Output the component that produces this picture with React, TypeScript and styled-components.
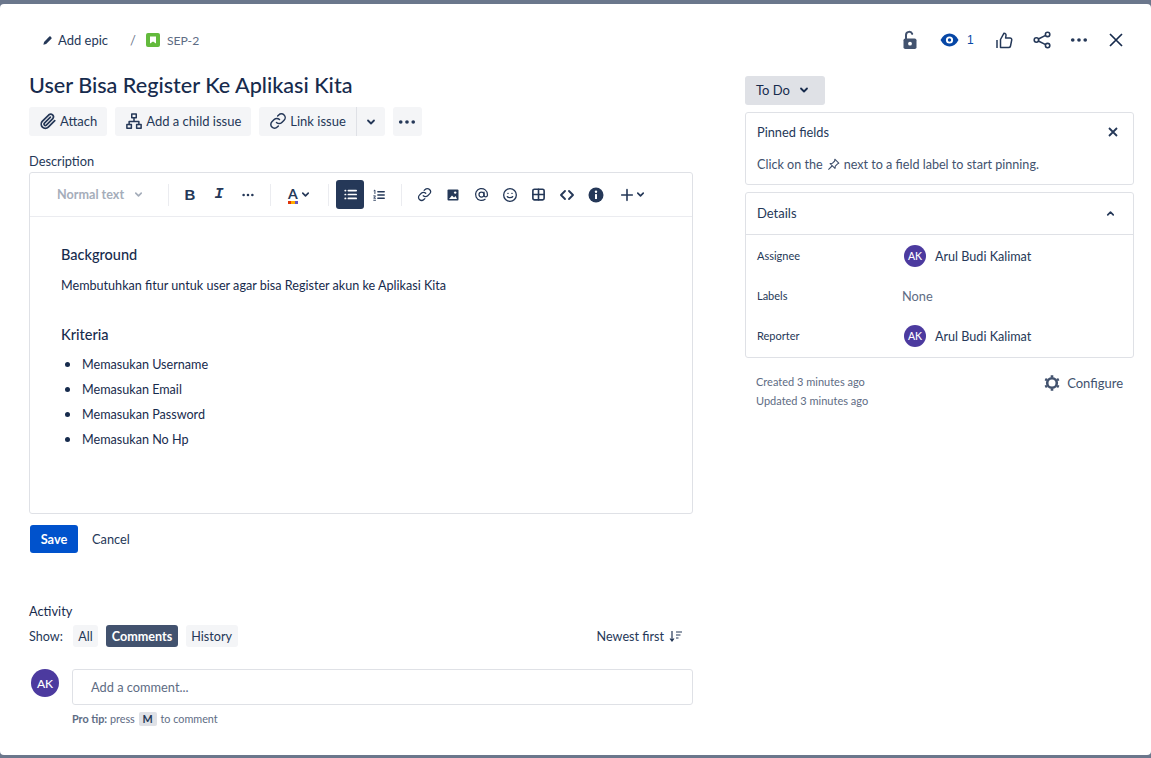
import React from 'react';
import styled, { createGlobalStyle } from 'styled-components';

const Global = createGlobalStyle`
    html, body { margin: 0; padding: 0; background: #6b778c; }
    * { box-sizing: border-box; }
    body { font-family: "Lato", "Noto Sans", sans-serif; color: #172b4d; }
`;

const Icon = ({ size = 16, color = 'currentColor', children }: { size?: number; color?: string; children: React.ReactNode }) => (
    <svg width={size} height={size} viewBox="0 0 24 24" fill="none" stroke={color} strokeWidth={2} strokeLinecap="round" strokeLinejoin="round" style={{ flex: 'none' }}>
        {children}
    </svg>
);

const Chevron = ({ size = 12, color = '#253858', up = false }: { size?: number; color?: string; up?: boolean }) => (
    <Icon size={size} color={color}>
        <path d={up ? 'M6 15l6-6 6 6' : 'M6 9l6 6 6-6'} strokeWidth={3.6} />
    </Icon>
);

const Dots = ({ size = 18, color = '#253858' }: { size?: number; color?: string }) => (
    <svg width={size} height={size} viewBox="0 0 24 24" fill={color} style={{ flex: 'none' }}>
        <circle cx="4.5" cy="12" r="2.2" />
        <circle cx="12" cy="12" r="2.2" />
        <circle cx="19.5" cy="12" r="2.2" />
    </svg>
);

const LinkGlyph = ({ size = 18 }: { size?: number }) => (
    <Icon size={size} color="#253858">
        <path d="M10 14a5 5 0 0 0 7.1 0l3-3a5 5 0 0 0-7.1-7.1l-1.5 1.5" />
        <path d="M14 10a5 5 0 0 0-7.1 0l-3 3a5 5 0 0 0 7.1 7.1l1.5-1.5" />
    </Icon>
);

export default function App() {
    return (
        <>
            <Global />
            <Modal>
                <LeftColumn>
                    <Breadcrumbs>
                        <Crumb>
                            <svg width="11" height="11" viewBox="0 0 24 24" fill="#253858">
                                <path d="M3 21l1.5-6L16 3.5a2 2 0 0 1 2.8 0l1.7 1.7a2 2 0 0 1 0 2.8L9 19.5z" />
                            </svg>
                            Add epic
                        </Crumb>
                        <Slash>/</Slash>
                        <svg width="14" height="14" viewBox="0 0 14 14">
                            <rect width="14" height="14" rx="2" fill="#63ba3c" />
                            <path d="M4 3.5h6v7L7 8.5l-3 2z" fill="#fff" />
                        </svg>
                        <IssueKey>SEP-2</IssueKey>
                    </Breadcrumbs>

                    <Title>User Bisa Register Ke Aplikasi Kita</Title>

                    <Actions>
                        <ActionButton>
                            <Icon size={18} color="#253858">
                                <path d="M21 11.5l-8.6 8.6a5.5 5.5 0 0 1-7.8-7.8l8.6-8.6a3.7 3.7 0 0 1 5.2 5.2l-8.6 8.6a1.8 1.8 0 0 1-2.6-2.6l8-8" strokeWidth={2.3} />
                            </Icon>
                            Attach
                        </ActionButton>
                        <ActionButton>
                            <Icon size={18} color="#253858">
                                <rect x="9" y="2.5" width="6" height="5" />
                                <rect x="2.5" y="16.5" width="6" height="5" />
                                <rect x="15.5" y="16.5" width="6" height="5" />
                                <path d="M12 7.5v5M5.5 16.5v-4h13v4" />
                            </Icon>
                            Add a child issue
                        </ActionButton>
                        <SplitGroup>
                            <SplitMain>
                                <LinkGlyph />
                                Link issue
                            </SplitMain>
                            <SplitArrow>
                                <Chevron />
                            </SplitArrow>
                        </SplitGroup>
                        <SquareButton>
                            <Dots size={20} />
                        </SquareButton>
                    </Actions>

                    <DescriptionLabel>Description</DescriptionLabel>
                    <Editor>
                        <Toolbar>
                            <FormatSelect>
                                Normal text
                                <Chevron size={11} color="#a5adba" />
                            </FormatSelect>
                            <Divider />
                            <ToolGroup>
                                <ToolButton>
                                    <BoldMark>B</BoldMark>
                                </ToolButton>
                                <ToolButton>
                                    <ItalicMark>I</ItalicMark>
                                </ToolButton>
                                <ToolButton>
                                    <Dots size={14} />
                                </ToolButton>
                            </ToolGroup>
                            <Divider />
                            <ColorButton>
                                <ColorLetter>A</ColorLetter>
                                <Chevron size={11} />
                            </ColorButton>
                            <Divider />
                            <ToolGroup>
                                <ToolButton $active>
                                    <Icon size={17} color="#fff">
                                        <path d="M9 6.5h11M9 12h11M9 17.5h11M4.5 6.5h.5M4.5 12h.5M4.5 17.5h.5" strokeWidth={2.4} />
                                    </Icon>
                                </ToolButton>
                                <ToolButton>
                                    <Icon size={14} color="#253858">
                                        <path d="M10 6.5h11M10 12h11M10 17.5h11" strokeWidth={2.4} />
                                        <path d="M3.5 4.5l1.5-1v6M3 13.5h3l-3 4h3M3 21h3" strokeWidth={1.6} />
                                    </Icon>
                                </ToolButton>
                            </ToolGroup>
                            <Divider />
                            <InsertGroup>
                                <ToolButton>
                                    <LinkGlyph size={15} />
                                </ToolButton>
                                <ToolButton>
                                    <svg width="14" height="14" viewBox="0 0 14 14">
                                        <rect x="1.5" y="1.5" width="11" height="11" rx="1" fill="#253858" />
                                        <path d="M3 11l3-3.5 2 2 1.5-1.5L11 11z" fill="#fff" />
                                        <circle cx="9.2" cy="4.6" r="1.2" fill="#fff" />
                                    </svg>
                                </ToolButton>
                                <ToolButton>
                                    <Icon size={15} color="#253858">
                                        <circle cx="12" cy="12" r="4" />
                                        <path d="M16 8v5.5a2.8 2.8 0 0 0 5.5 0V12a9.5 9.5 0 1 0-3.8 7.6" />
                                    </Icon>
                                </ToolButton>
                                <ToolButton>
                                    <Icon size={16} color="#253858">
                                        <circle cx="12" cy="12" r="9.5" />
                                        <path d="M8 14.5c1 2 7 2 8 0M8.8 9.5h.4M14.8 9.5h.4" />
                                    </Icon>
                                </ToolButton>
                                <ToolButton>
                                    <Icon size={15} color="#253858">
                                        <rect x="3" y="3.5" width="18" height="17" rx="2.5" strokeWidth={2.6} />
                                        <path d="M3 12h18M12 3.5v17" strokeWidth={2.6} />
                                    </Icon>
                                </ToolButton>
                                <ToolButton>
                                    <Icon size={16} color="#253858">
                                        <path d="M9 6l-6 6 6 6M15 6l6 6-6 6" strokeWidth={2.8} />
                                    </Icon>
                                </ToolButton>
                                <ToolButton>
                                    <svg width="16" height="16" viewBox="0 0 16 16">
                                        <circle cx="8" cy="8" r="7.5" fill="#253858" />
                                        <rect x="7" y="7" width="2" height="5" rx="0.6" fill="#fff" />
                                        <circle cx="8" cy="4.8" r="1.2" fill="#fff" />
                                    </svg>
                                </ToolButton>
                                <PlusButton>
                                    <Icon size={16} color="#253858">
                                        <path d="M12 4v16M4 12h16" strokeWidth={2.4} />
                                    </Icon>
                                    <Chevron size={11} />
                                </PlusButton>
                            </InsertGroup>
                        </Toolbar>
                        <EditorBody>
                            <EditorHeading>Background</EditorHeading>
                            <EditorText>Membutuhkan fitur untuk user agar bisa Register akun ke Aplikasi Kita</EditorText>
                            <EditorHeading $spaced>Kriteria</EditorHeading>
                            <BulletList>
                                <li>Memasukan Username</li>
                                <li>Memasukan Email</li>
                                <li>Memasukan Password</li>
                                <li>Memasukan No Hp</li>
                            </BulletList>
                        </EditorBody>
                    </Editor>

                    <FormButtons>
                        <SaveButton>Save</SaveButton>
                        <CancelButton>Cancel</CancelButton>
                    </FormButtons>

                    <ActivityTitle>Activity</ActivityTitle>
                    <ShowRow>
                        <ShowLabel>Show:</ShowLabel>
                        <Filter>All</Filter>
                        <Filter $active>Comments</Filter>
                        <Filter>History</Filter>
                        <SortButton>
                            Newest first
                            <svg width="13" height="13" viewBox="0 0 13 13" fill="none" stroke="#253858" strokeWidth="1.2">
                                <path d="M3 1v10M1 8.5L3 11l2-2.5M7 2h6M7 5h4.5M7 8h2.5" />
                            </svg>
                        </SortButton>
                    </ShowRow>
                    <CommentRow>
                        <Avatar $size={28}>AK</Avatar>
                        <CommentBox>Add a comment...</CommentBox>
                    </CommentRow>
                    <ProTip>
                        <strong>Pro tip:</strong> press <KeyCap>M</KeyCap> to comment
                    </ProTip>
                </LeftColumn>

                <RightColumn>
                    <TopIcons>
                        <TopIcon>
                            <svg width="18" height="20" viewBox="0 0 18 20" fill="none">
                                <path d="M5 9V5a3.2 3.2 0 0 1 6.2-1.1" stroke="#42526e" strokeWidth="2" strokeLinecap="round" />
                                <rect x="2.5" y="8.5" width="13" height="10.5" rx="1.8" fill="#42526e" />
                                <circle cx="9" cy="13.7" r="1.9" fill="#fff" />
                            </svg>
                        </TopIcon>
                        <WatchButton>
                            <svg width="19" height="14" viewBox="0 0 19 14">
                                <path d="M0.5 7C3 2.5 6 0.5 9.5 0.5S16 2.5 18.5 7C16 11.5 13 13.5 9.5 13.5S3 11.5 0.5 7z" fill="#0747a6" />
                                <circle cx="9.5" cy="7" r="3.6" fill="#fff" />
                                <circle cx="9.5" cy="7" r="1.7" fill="#0747a6" />
                            </svg>
                            <WatchCount>1</WatchCount>
                        </WatchButton>
                        <TopIcon>
                            <svg width="17" height="17" viewBox="0 0 17 17" fill="none" stroke="#253858" strokeWidth="1.5" strokeLinejoin="round">
                                <path d="M1 8v8M4.5 7.5L8 1.2c1.4 0 2.2 1 2 2.3L9.6 6H14c1.2 0 2 1 1.7 2.2l-1.2 5.8c-.2 1-.9 1.6-2 1.6H4.5z" />
                            </svg>
                        </TopIcon>
                        <TopIcon>
                            <svg width="18" height="18" viewBox="0 0 18 18" fill="none" stroke="#253858" strokeWidth="1.6">
                                <circle cx="3.4" cy="9" r="2.2" />
                                <circle cx="14.6" cy="3.4" r="2.2" />
                                <circle cx="14.6" cy="14.6" r="2.2" />
                                <path d="M5.4 8l7.2-3.6M5.4 10l7.2 3.6" />
                            </svg>
                        </TopIcon>
                        <TopIcon>
                            <Dots size={20} />
                        </TopIcon>
                        <TopIcon>
                            <svg width="14" height="14" viewBox="0 0 14 14" fill="none" stroke="#172b4d" strokeWidth="1.7">
                                <path d="M1 1l12 12M13 1L1 13" />
                            </svg>
                        </TopIcon>
                    </TopIcons>

                    <StatusButton>
                        To Do
                        <Chevron size={12} color="#172b4d" />
                    </StatusButton>

                    <PinnedPanel>
                        <PinnedHead>
                            Pinned fields
                            <svg width="10" height="10" viewBox="0 0 10 10" fill="none" stroke="#253858" strokeWidth="1.8">
                                <path d="M1 1l8 8M9 1L1 9" />
                            </svg>
                        </PinnedHead>
                        <PinnedHint>
                            Click on the
                            <svg width="13" height="13" viewBox="0 0 13 13" fill="none" stroke="#42526e" strokeWidth="1.1" strokeLinejoin="round">
                                <path d="M7.8 1.2l4 4-1.2.6-2.3 2.4-.3 2.2L3.1 5.6l2.2-.3 2.4-2.3zM5 8l-3.6 3.6" />
                            </svg>
                            next to a field label to start pinning.
                        </PinnedHint>
                    </PinnedPanel>

                    <DetailsPanel>
                        <DetailsHead>
                            Details
                            <Chevron size={11} up />
                        </DetailsHead>
                        <DetailsBody>
                            <FieldRow>
                                <FieldLabel>Assignee</FieldLabel>
                                <FieldValue>
                                    <Avatar $size={22}>AK</Avatar>
                                    Arul Budi Kalimat
                                </FieldValue>
                            </FieldRow>
                            <FieldRow>
                                <FieldLabel>Labels</FieldLabel>
                                <NoneValue>None</NoneValue>
                            </FieldRow>
                            <FieldRow>
                                <FieldLabel>Reporter</FieldLabel>
                                <FieldValue>
                                    <Avatar $size={22}>AK</Avatar>
                                    Arul Budi Kalimat
                                </FieldValue>
                            </FieldRow>
                        </DetailsBody>
                    </DetailsPanel>

                    <MetaRow>
                        <Timestamps>
                            <span>Created 3 minutes ago</span>
                            <span>Updated 3 minutes ago</span>
                        </Timestamps>
                        <ConfigureButton>
                            <svg width="18" height="18" viewBox="0 0 18 18" fill="none" stroke="#42526e" strokeWidth="2.6">
                                <circle cx="9" cy="9" r="4.8" />
                                <path d="M9 1.2v2M9 14.8v2M2.2 5.1l1.8 1M14 11.9l1.8 1M2.2 12.9l1.8-1M14 6.1l1.8-1" />
                            </svg>
                            Configure
                        </ConfigureButton>
                    </MetaRow>
                </RightColumn>
            </Modal>
        </>
    );
}

const Modal = styled.div`
    margin-top: 4px;
    width: 1151px;
    height: 751px;
    background: #fff;
    border-radius: 4px;
    display: flex;
    padding: 0 17px 0 29px;
    overflow: hidden;
`;

const LeftColumn = styled.div`
    width: 664px;
    display: flex;
    flex-direction: column;
    align-items: stretch;
`;

const RightColumn = styled.div`
    width: 389px;
    margin-left: 52px;
    display: flex;
    flex-direction: column;
`;

const Breadcrumbs = styled.div`
    height: 20px;
    margin-top: 26px;
    padding-left: 13px;
    display: flex;
    align-items: center;
    font-size: 13px;
`;

const Crumb = styled.span`
    display: flex;
    align-items: center;
    gap: 5px;
    color: #253858;
`;

const Slash = styled.span`
    margin: 0 10px 0 22px;
    color: #6b778c;
`;

const IssueKey = styled.span`
    margin-left: 7px;
    font-size: 12.2px;
    color: #5e6c84;
`;

const Title = styled.h1`
    margin: 19px 0 0;
    height: 32px;
    line-height: 32px;
    font-size: 21.6px;
    font-weight: 500;
    color: #172b4d;
    white-space: nowrap;
`;

const Actions = styled.div`
    margin-top: 6px;
    display: flex;
    gap: 8px;
    height: 29px;
`;

const ActionButton = styled.div`
    display: flex;
    align-items: center;
    gap: 3px;
    padding: 0 10px 1px;
    background: #f4f5f7;
    border-radius: 3px;
    font-size: 13px;
    color: #253858;
`;

const SplitGroup = styled.div`
    display: flex;
`;

const SplitMain = styled(ActionButton)`
    border-radius: 3px 0 0 3px;
    border-right: 1px solid #dfe1e6;
    padding: 0 10px 1px 10px;
`;

const SplitArrow = styled(ActionButton)`
    border-radius: 0 3px 3px 0;
    padding: 0 8px;
`;

const SquareButton = styled(ActionButton)`
    padding: 0 4.5px;
`;

const DescriptionLabel = styled.div`
    margin-top: 16px;
    height: 19px;
    line-height: 19px;
    font-size: 12.8px;
    color: #253858;
`;

const Editor = styled.div`
    margin-top: 1px;
    height: 342px;
    border: 1px solid #dfe1e6;
    border-radius: 3px;
    display: flex;
    flex-direction: column;
`;

const Toolbar = styled.div`
    height: 44px;
    flex: none;
    border-bottom: 1px solid #ebecf0;
    display: flex;
    align-items: center;
    padding-left: 27px;
`;

const FormatSelect = styled.div`
    width: 111px;
    display: flex;
    align-items: center;
    gap: 9px;
    font-size: 12.6px;
    font-weight: 700;
    color: #a5adba;
`;

const Divider = styled.span`
    width: 1px;
    height: 22px;
    background: #ebecf0;
    flex: none;
`;

const ToolGroup = styled.div`
    display: flex;
    gap: 1px;
    margin: 0 8px 0 7px;
`;

const InsertGroup = styled(ToolGroup)`
    gap: 0.7px;
    margin: 0 0 0 8px;
`;

const ToolButton = styled.div<{ $active?: boolean }>`
    width: 28px;
    height: 29px;
    border-radius: 3px;
    display: flex;
    align-items: center;
    justify-content: center;
    background: ${p => (p.$active ? '#253858' : 'transparent')};
`;

const BoldMark = styled.span`
    font-family: "Liberation Sans", sans-serif;
    font-size: 15px;
    font-weight: 700;
    color: #253858;
`;

const ItalicMark = styled.span`
    font-family: "Liberation Mono", monospace;
    font-size: 15px;
    font-style: italic;
    font-weight: 700;
    color: #253858;
`;

const ColorButton = styled.div`
    width: 57px;
    padding-left: 17px;
    display: flex;
    align-items: center;
    gap: 2px;
`;

const ColorLetter = styled.span`
    font-size: 14px;
    font-weight: 700;
    line-height: 15px;
    color: #253858;
    border-bottom: 3px solid transparent;
    border-image: linear-gradient(90deg, #de350b 0 33%, #ffab00 33% 66%, #6554c0 66%) 1;
`;

const PlusButton = styled.div`
    margin-left: 2px;
    display: flex;
    align-items: center;
    gap: 0;
    padding-left: 6px;
`;

const EditorBody = styled.div`
    padding: 28px 31px 0;
    font-size: 12.6px;
    color: #172b4d;
`;

const EditorHeading = styled.h3<{ $spaced?: boolean }>`
    margin: ${p => (p.$spaced ? '29px' : '0')} 0 0;
    height: 20px;
    line-height: 20px;
    font-size: 14.5px;
    font-weight: 500;
`;

const EditorText = styled.p`
    margin: 11px 0 0;
    height: 20px;
    line-height: 20px;
`;

const BulletList = styled.ul`
    margin: 8px 0 0;
    padding-left: 21px;

    li {
        height: 25px;
        line-height: 20px;
    }

    li::marker {
        font-size: 16px;
    }
`;

const FormButtons = styled.div`
    margin-top: 11px;
    display: flex;
    align-items: center;
    gap: 14px;
`;

const SaveButton = styled.div`
    width: 48px;
    height: 28px;
    line-height: 28px;
    text-align: center;
    background: #0052cc;
    color: #fff;
    border-radius: 3px;
    font-size: 12.8px;
    font-weight: 700;
    margin-left: 1px;
`;

const CancelButton = styled.div`
    font-size: 12.8px;
    color: #253858;
`;

const ActivityTitle = styled.div`
    margin-top: 49px;
    height: 18px;
    line-height: 18px;
    font-size: 12.8px;
    color: #172b4d;
`;

const ShowRow = styled.div`
    margin-top: 5px;
    height: 22px;
    display: flex;
    align-items: center;
    font-size: 12.6px;
`;

const ShowLabel = styled.span`
    color: #253858;
    margin-right: 10px;
`;

const Filter = styled.span<{ $active?: boolean }>`
    height: 22px;
    line-height: 24px;
    padding: 0 5.5px;
    margin-right: 8px;
    border-radius: 3px;
    font-weight: ${p => (p.$active ? 700 : 400)};
    color: ${p => (p.$active ? '#fff' : '#253858')};
    background: ${p => (p.$active ? '#42526e' : '#f4f5f7')};
`;

const SortButton = styled.span`
    margin-left: auto;
    margin-right: 11px;
    display: flex;
    align-items: center;
    gap: 5px;
    color: #253858;
`;

const CommentRow = styled.div`
    margin-top: 22px;
    display: flex;
    align-items: flex-start;
    padding-left: 2px;
`;

const Avatar = styled.span<{ $size: number }>`
    width: ${p => p.$size}px;
    height: ${p => p.$size}px;
    flex: none;
    border-radius: 50%;
    background: #4c3a9f;
    color: #fff;
    display: inline-flex;
    align-items: center;
    justify-content: center;
    font-size: ${p => (p.$size > 24 ? 12 : 10.5)}px;
    font-weight: 500;
`;

const CommentBox = styled.div`
    margin-left: 13px;
    flex: 1;
    height: 36px;
    line-height: 34px;
    padding-left: 18px;
    border: 1px solid #dfe1e6;
    border-radius: 3px;
    font-size: 12.8px;
    color: #5e6c84;
`;

const ProTip = styled.div`
    margin: 6px 0 0 43px;
    font-size: 10.8px;
    height: 16px;
    line-height: 16px;
    color: #5e6c84;

    strong {
        font-weight: 700;
    }
`;

const KeyCap = styled.span`
    display: inline-block;
    padding: 0 4px;
    margin: 0 1px;
    border-radius: 2px;
    background: #dfe1e6;
    color: #253858;
    font-weight: 700;
    line-height: 14px;
`;

const TopIcons = styled.div`
    margin-top: 26px;
    height: 20px;
    padding-left: 146px;
    display: flex;
    align-items: center;
`;

const TopIcon = styled.span`
    width: 37px;
    display: flex;
    justify-content: center;
    flex: none;
`;

const WatchButton = styled.span`
    width: 58px;
    padding-left: 12px;
    display: flex;
    align-items: center;
    gap: 8px;
    flex: none;
`;

const WatchCount = styled.span`
    font-family: "Liberation Sans", sans-serif;
    font-size: 12px;
    color: #0747a6;
`;

const StatusButton = styled.div`
    margin-top: 26px;
    width: 80px;
    height: 29px;
    padding: 0 0 1px 11px;
    border-radius: 3px;
    background: #dfe1e6;
    display: flex;
    align-items: center;
    gap: 8px;
    font-size: 13px;
    color: #172b4d;
`;

const Panel = styled.section`
    border: 1px solid #dfe1e6;
    border-radius: 3px;
`;

const PinnedPanel = styled(Panel)`
    margin-top: 7px;
    height: 73px;
    padding: 0 15px 0 11px;
    font-size: 12.8px;
    color: #253858;
`;

const PinnedHead = styled.div`
    height: 37px;
    display: flex;
    align-items: center;
    justify-content: space-between;
`;

const PinnedHint = styled.div`
    height: 28px;
    display: flex;
    align-items: center;
    gap: 4px;
    font-size: 12.6px;
    color: #42526e;
`;

const DetailsPanel = styled(Panel)`
    margin-top: 7px;
    height: 166px;
`;

const DetailsHead = styled.div`
    height: 42px;
    padding: 0 17px 1px 11px;
    border-bottom: 1px solid #dfe1e6;
    display: flex;
    align-items: center;
    justify-content: space-between;
    font-size: 13px;
    color: #253858;
`;

const DetailsBody = styled.div`
    padding: 1px 11px 0;
`;

const FieldRow = styled.div`
    height: 40px;
    display: flex;
    align-items: center;
`;

const FieldLabel = styled.span`
    width: 145px;
    flex: none;
    padding-bottom: 2px;
    font-size: 11px;
    color: #253858;
`;

const FieldValue = styled.span`
    margin-left: 2px;
    display: flex;
    align-items: center;
    gap: 9px;
    font-size: 12.6px;
    color: #253858;
`;

const NoneValue = styled.span`
    font-size: 12.8px;
    color: #5e6c84;
`;

const MetaRow = styled.div`
    margin-top: 14px;
    padding: 0 11px;
    display: flex;
    justify-content: space-between;
    align-items: flex-start;
`;

const Timestamps = styled.div`
    display: flex;
    flex-direction: column;
    font-size: 11px;
    line-height: 19px;
    color: #5e6c84;
`;

const ConfigureButton = styled.div`
    display: flex;
    align-items: center;
    gap: 6px;
    font-size: 13px;
    color: #42526e;
    height: 22px;
`;
